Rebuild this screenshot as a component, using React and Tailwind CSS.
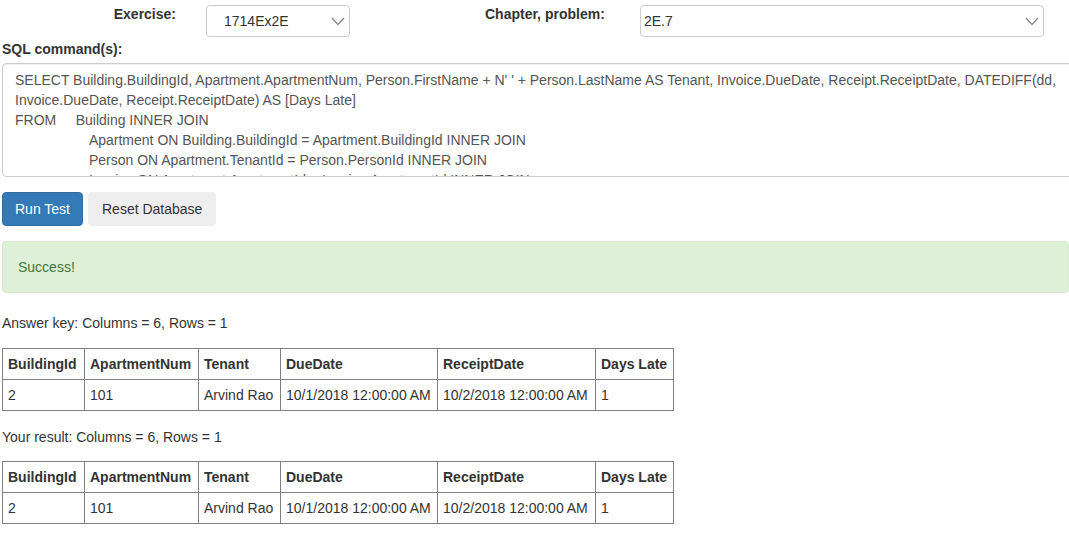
import React from 'react';

const columns = ['BuildingId', 'ApartmentNum', 'Tenant', 'DueDate', 'ReceiptDate', 'Days Late'];
const widths = ['w-[82px]', 'w-[114px]', 'w-[82px]', 'w-[157px]', 'w-[158px]', 'w-[78px]'];
const rows = [['2', '101', 'Arvind Rao', '10/1/2018 12:00:00 AM', '10/2/2018 12:00:00 AM', '1']];

const sql = `SELECT Building.BuildingId, Apartment.ApartmentNum, Person.FirstName + N' ' + Person.LastName AS Tenant, Invoice.DueDate, Receipt.ReceiptDate, DATEDIFF(dd, Invoice.DueDate, Receipt.ReceiptDate) AS [Days Late]
FROM     Building INNER JOIN
                   Apartment ON Building.BuildingId = Apartment.BuildingId INNER JOIN
                   Person ON Apartment.TenantId = Person.PersonId INNER JOIN
                   Invoice ON Apartment.ApartmentId = Invoice.ApartmentId INNER JOIN`;

const Chevron = () => (
  <svg width="14" height="9" viewBox="0 0 14 9" fill="none" stroke="#888" strokeWidth="1.2">
    <path d="M1 1 L7 7.5 L13 1" />
  </svg>
);

const ResultTable = () => (
  <table className="border-collapse table-fixed text-[14px] text-[#333]">
    <thead>
      <tr className="h-[31px]">
        {columns.map((c, i) => (
          <th key={c} className={`${widths[i]} border border-[#808080] px-[5px] text-left font-bold whitespace-nowrap`}>{c}</th>
        ))}
      </tr>
    </thead>
    <tbody>
      {rows.map((r, i) => (
        <tr key={i} className="h-[31px]">
          {r.map((v, j) => (
            <td key={j} className="border border-[#808080] px-[5px] whitespace-nowrap">{v}</td>
          ))}
        </tr>
      ))}
    </tbody>
  </table>
);

export default function App() {
  return (
    <div className="w-[1069px] h-[534px] overflow-hidden bg-white text-[14px] text-[#333] font-['Liberation_Sans',Arial,sans-serif]">
      <div className="pl-[2px] w-[1080px]">
        {/* selectors */}
        <div className="flex items-start pt-[5px]">
          <div className="w-[174px] text-right font-bold leading-[20px] -mt-[1px]">Exercise:</div>
          <div className="ml-[30px] w-[144px] h-[32px] border border-[#ccc] rounded-[4px] flex items-center justify-between pl-[17px] pr-[4px]">
            <span className="pt-[1px]">1714Ex2E</span>
            <Chevron />
          </div>
          <div className="ml-[135px] w-[125px] font-bold leading-[20px] -mt-[1px]">Chapter, problem:</div>
          <div className="ml-[30px] w-[404px] h-[32px] border border-[#ccc] rounded-[4px] flex items-center justify-between pl-[3px] pr-[4px]">
            <span className="pt-[1px]">2E.7</span>
            <Chevron />
          </div>
        </div>

        <div className="font-bold mt-[2px] leading-[20px]">SQL command(s):</div>

        <div className="mt-[4px] w-[1075px] h-[114px] border border-[#ccc] rounded-[4px] overflow-hidden px-[12px] pt-[6px] shadow-[inset_0_1px_1px_rgba(0,0,0,0.075)]">
          <pre className="whitespace-pre-wrap font-['Liberation_Sans',Arial,sans-serif] text-[14px] leading-[20px] text-[#555]">{sql}</pre>
        </div>

        {/* buttons */}
        <div className="flex gap-[5px] mt-[15px]">
          <button className="h-[34px] px-[12px] rounded-[4px] bg-[#337ab7] border border-[#2e6da4] text-white">Run Test</button>
          <button className="h-[34px] px-[14px] rounded-[4px] bg-[#eee] text-[#333]">Reset Database</button>
        </div>

        <div className="mt-[15px] w-[1067px] h-[52px] bg-[#dff0d8] border border-[#d6e9c6] rounded-[4px] text-[#3c763d] flex items-center pl-[15px]">
          Success!
        </div>

        <div className="mt-[20px] leading-[20px]">Answer key: Columns = 6, Rows = 1</div>
        <div className="mt-[15px]">
          <ResultTable />
        </div>

        <div className="mt-[16px] leading-[20px]">Your result: Columns = 6, Rows = 1</div>
        <div className="mt-[14px]">
          <ResultTable />
        </div>
      </div>
    </div>
  );
}
